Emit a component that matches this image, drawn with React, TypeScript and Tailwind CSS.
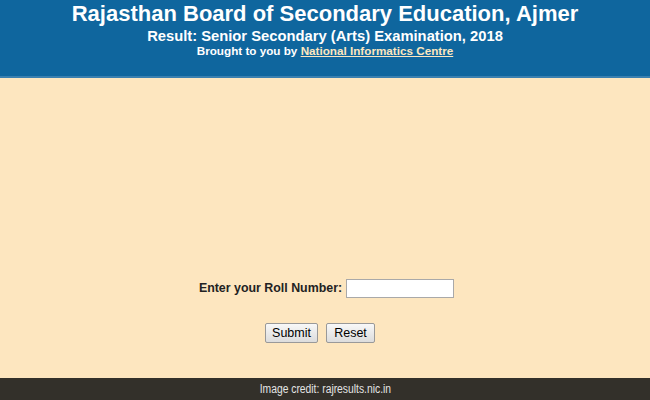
export default function App() {
  return (
    <div className="flex h-[400px] w-[650px] flex-col bg-[#fde6bf] font-['Liberation_Sans',Arial,sans-serif]">
      <div className="flex h-[78px] shrink-0 flex-col items-center border-b-2 border-[#3a80b0] bg-[#0f669e] text-white">
        <h1 className="text-[22px] font-bold leading-[28px]">Rajasthan Board of Secondary Education, Ajmer</h1>
        <h2 className="text-[14.75px] font-bold leading-[16px]">Result: Senior Secondary (Arts) Examination, 2018</h2>
        <p className="text-[11.7px] font-bold leading-[14px]">
          Brought to you by{' '}
          <a href="#" className="text-[#fde6bf] underline">
            National Informatics Centre
          </a>
        </p>
      </div>

      <div className="flex flex-1 flex-col items-center pt-[201px]">
        <div className="ml-[3px] flex items-center gap-1">
          <label className="text-[12.4px] font-bold text-[#222]">Enter your Roll Number:</label>
          <input className="h-[19px] w-[108px] border border-[#a9a9a9] bg-white" />
        </div>
        <div className="mr-[10px] mt-[25px] flex gap-2">
          <button className="h-[20px] w-[53px] rounded-[2px] border border-[#999] bg-gradient-to-b from-[#f8f8f8] to-[#dcdcdc] text-[12.5px] text-black">
            Submit
          </button>
          <button className="h-[20px] w-[49px] rounded-[2px] border border-[#999] bg-gradient-to-b from-[#f8f8f8] to-[#dcdcdc] text-[12.5px] text-black">
            Reset
          </button>
        </div>
      </div>

      <div className="flex h-[22px] shrink-0 items-center justify-center bg-[#33302a] text-[12px] text-[#e4e4e4]">
        <span className="inline-block scale-x-[0.86]">Image credit: rajresults.nic.in</span>
      </div>
    </div>
  )
}
